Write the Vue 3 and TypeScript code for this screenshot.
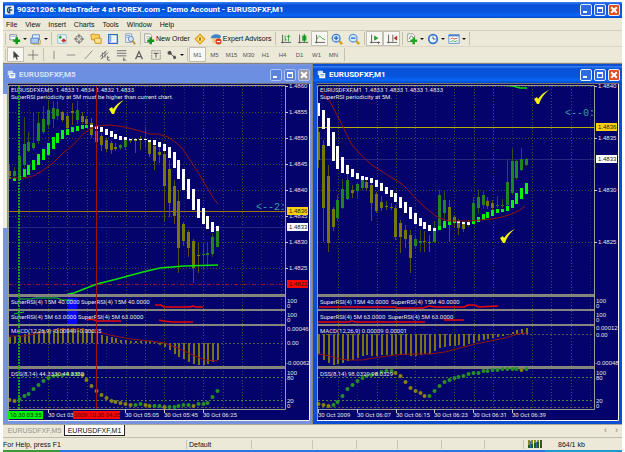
<script setup lang="ts">
type Pt = [number, number]
type Candle = [high: number, top: number, bottom: number, low: number, rising: 0 | 1]
type Bar = [top: number, bottom: number, color: 'g' | 'w']
interface Tag { y: number; text: string; kind: string }
interface Label { x: number; text: string }
interface Chart {
  id: string
  title: string
  active: boolean
  viewBox: string
  left: number
  axis: number
  end: number
  first: number
  grid: number[]
  rows: [number, string][]
  head: string
  note: string
  candles: Candle[]
  smooth: Bar[]
  average: Pt[]
  trend: Pt[]
  priceY: number
  bidY: number
  tags: Tag[]
  arrow: string
  arrowY: number
  checks: Pt[]
  sub1: Pt[][]
  sub2: Pt[][]
  rsiGap: number
  zero: number
  macd: number[]
  signal: Pt[]
  macdText: string
  macdAxis: [number, string][]
  dss: number[]
  dssText: string
  times: Label[]
}

const STEP = 4.84
const range = (from: number, step: number, n: number) => Array.from({ length: n }, (_, i) => Math.round(from + i * step))
const join = (p: Pt[]) => p.map(v => v.join(',')).join(' ')
const barX = (c: Chart, i: number) => Math.round(c.first + i * STEP - 0.5)
const rises = (v: number[], i: number) => (i > 0 ? v[i] <= v[i - 1] : false)

const charts: Chart[] = [
  {
    id: 'm5', title: 'EURUSDFXF,M5', active: false, viewBox: '8 83 302 338', left: 9, axis: 285, end: 309, first: 9.5,
    grid: range(28.5, 19.4, 14),
    rows: [[86, '1.4860'], [112, '1.4855'], [138, '1.4850'], [164, '1.4845'], [190, '1.4840'], [216, '1.4835'], [242, '1.4830'], [268, '1.4825']],
    head: 'EURUSDFXF,M5\u00a0 1.4833 1.4834 1.4832 1.4833',
    note: 'SuperRSI periodicity at 5M must be higher than current chart.',
    candles: [
      [165, 171, 176, 178, 0], [167, 171, 176, 178, 1], [140, 156, 177, 178, 1], [117, 144, 165, 168, 1], [132, 142, 151, 152, 1],
      [112, 143, 148, 150, 1], [112, 123, 141, 144, 1], [106, 119, 132, 134, 1], [100, 110, 125, 128, 1], [101, 108, 119, 128, 1],
      [101, 109, 116, 120, 1], [111, 112, 120, 122, 0], [112, 116, 128, 130, 0], [103, 111, 113, 125, 0], [101, 110, 120, 124, 1],
      [112, 116, 122, 124, 0], [116, 119, 124, 126, 0], [118, 123, 135, 138, 0], [126, 131, 142, 144, 0], [133, 136, 145, 151, 0],
      [138, 140, 149, 152, 0], [141, 143, 150, 154, 0], [143, 147, 149, 151, 0], [144, 145, 148, 150, 1], [137, 139, 147, 150, 1],
      [139, 140, 141, 143, 0], [138, 140, 141, 153, 0], [136, 139, 140, 150, 0], [127, 139, 140, 148, 1], [140, 141, 154, 157, 0],
      [143, 146, 161, 170, 0], [146, 152, 155, 163, 0], [151, 154, 186, 221, 0], [160, 169, 203, 217, 0], [180, 186, 216, 224, 0],
      [190, 201, 248, 273, 0], [222, 224, 241, 246, 0], [230, 232, 248, 257, 0], [239, 241, 268, 283, 0], [242, 255, 256, 273, 0],
      [242, 254, 255, 269, 1], [242, 253, 255, 267, 1], [233, 237, 254, 257, 1], [228, 231, 247, 247, 1],
    ],
    smooth: [
      [177, 179, 'g'], [178, 181, 'g'], [176, 180, 'g'], [169, 177, 'g'], [165, 175, 'g'], [160, 170, 'g'], [154, 165, 'g'], [149, 160, 'g'],
      [143, 155, 'g'], [137, 149, 'g'], [133, 143, 'g'], [130, 139, 'g'], [129, 135, 'g'], [127, 132, 'g'], [126, 131, 'g'], [125, 129, 'g'],
      [125, 128, 'g'], [125, 127, 'w'], [126, 129, 'w'], [127, 132, 'w'], [129, 135, 'w'], [131, 137, 'w'], [134, 139, 'w'], [136, 140, 'w'],
      [137, 140, 'w'], [139, 140, 'w'], [139, 140, 'w'], [139, 140, 'w'], [139, 140, 'w'], [140, 142, 'w'], [140, 145, 'w'], [142, 147, 'w'],
      [144, 151, 'w'], [147, 158, 'w'], [152, 168, 'w'], [160, 179, 'w'], [169, 190, 'w'], [179, 199, 'w'], [189, 210, 'w'], [199, 218, 'w'],
      [208, 224, 'w'], [216, 229, 'w'], [222, 232, 'w'], [226, 231, 'w'],
    ],
    average: [[9, 178], [26, 178], [33, 176], [42, 171], [53, 163], [63, 153], [72, 146], [83, 134], [90, 129], [97, 126], [110, 125], [125, 127], [140, 131], [150, 134], [158, 134], [168, 137], [175, 142], [182, 148], [190, 160], [198, 172], [206, 186], [214, 199], [218, 204]],
    trend: [[68, 294], [74, 293], [84, 289], [97, 284], [117, 279], [143, 272], [160, 268], [172, 267], [184, 266], [218, 265]],
    priceY: 211, bidY: 227,
    tags: [{ y: 211, text: '1.4836', kind: 'gold' }, { y: 227, text: '1.4833', kind: 'white' }, { y: 284, text: '1.4822', kind: 'red' }],
    arrow: '<--2:', arrowY: 211,
    checks: [[109, 100]],
    sub1: [[[155, 305], [161, 305], [164, 307], [190, 307], [193, 306], [196, 307], [203, 307]]],
    sub2: [[[87, 320], [91, 319], [97, 321], [121, 321]], [[159, 320], [163, 321], [173, 322], [193, 322]]],
    rsiGap: 81,
    zero: 343,
    macd: [337, 336, 336, 334, 333, 332, 331, 330, 329, 329, 328, 328, 328, 328, 328, 328, 329, 330, 332, 335, 336, 337, 338, 340, 340, 341, 341, 341, 341, 341, 342, 345, 347, 350, 354, 357, 359, 362, 364, 365, 365, 364, 362, 360],
    signal: [[9, 336], [25, 336], [40, 333], [60, 329], [80, 329], [95, 331], [110, 335], [130, 339], [150, 341], [165, 343], [180, 349], [195, 356], [205, 360], [218, 361]],
    macdText: 'MACD(12,26,9) -0.00049 -0.00035',
    macdAxis: [[329, '0.00046'], [343, '0.00'], [363, '-0.00062']],
    dss: [400, 401, 399, 396, 394, 389, 385, 381, 378, 376, 375, 375, 374, 374, 374, 375, 380, 386, 391, 395, 398, 401, 402, 403, 404, 405, 405, 404, 405, 406, 406, 406, 407, 407, 407, 406, 405, 405, 406, 404, 404, 403, 397, 391],
    dssText: 'DSS(8,14) 44.3330 44.3330',
    times: [{ x: 48, text: '30 Oct 03' }, { x: 125, text: '30 Oct 05:05' }, { x: 164, text: '30 Oct 05:45' }, { x: 203, text: '30 Oct 06:25' }],
  },
  {
    id: 'm1', title: 'EURUSDFXF,M1', active: true, viewBox: '316 83 303 338', left: 318, axis: 594, end: 618, first: 318.5,
    grid: range(337.7, 19.4, 14),
    rows: [[86, '1.4840'], [138, '1.4835'], [190, '1.4830'], [242, '1.4825']],
    head: 'EURUSDFXF,M1\u00a0 1.4833 1.4833 1.4833 1.4833',
    note: 'SuperRSI periodicity at 5M.',
    candles: [
      [128, 132, 160, 168, 0], [140, 145, 208, 242, 0], [165, 176, 243, 252, 0], [207, 209, 227, 231, 0], [195, 200, 218, 221, 1],
      [179, 189, 208, 209, 1], [174, 180, 199, 200, 1], [185, 190, 193, 198, 0], [183, 184, 191, 199, 1], [177, 178, 188, 190, 1],
      [180, 182, 188, 190, 0], [183, 185, 203, 221, 0], [192, 194, 211, 213, 0], [196, 202, 208, 211, 0], [201, 206, 207, 210, 0],
      [203, 207, 208, 210, 0], [205, 208, 237, 240, 0], [220, 223, 237, 253, 0], [225, 230, 239, 248, 0], [230, 235, 258, 273, 0],
      [235, 239, 246, 249, 1], [230, 241, 243, 252, 1], [231, 241, 242, 252, 0], [235, 242, 243, 252, 0], [221, 231, 242, 243, 1],
      [190, 195, 227, 230, 1], [190, 200, 213, 224, 1], [200, 207, 225, 242, 0], [215, 217, 222, 228, 0], [219, 222, 228, 235, 0],
      [221, 223, 229, 232, 0], [220, 222, 224, 227, 0], [197, 203, 222, 224, 1], [190, 197, 208, 214, 1], [190, 195, 205, 209, 1],
      [197, 201, 206, 209, 0], [200, 203, 208, 210, 0], [196, 205, 206, 208, 1], [199, 205, 206, 208, 1], [159, 182, 205, 208, 1],
      [148, 161, 193, 195, 1], [160, 161, 178, 180, 1], [148, 159, 170, 171, 1], [158, 159, 165, 166, 1],
    ],
    smooth: [
      [103, 116, 'w'], [110, 129, 'w'], [118, 146, 'w'], [132, 161, 'w'], [146, 169, 'w'], [157, 173, 'w'], [165, 174, 'w'], [169, 177, 'w'],
      [173, 179, 'w'], [176, 180, 'w'], [177, 180, 'w'], [178, 183, 'w'], [180, 187, 'w'], [183, 191, 'w'], [187, 194, 'w'], [190, 197, 'w'],
      [193, 202, 'w'], [197, 208, 'w'], [202, 213, 'w'], [207, 219, 'w'], [213, 224, 'w'], [218, 226, 'w'], [222, 229, 'w'], [225, 231, 'w'],
      [228, 231, 'w'], [226, 230, 'g'], [221, 228, 'g'], [221, 225, 'g'], [221, 223, 'g'], [221, 223, 'w'], [222, 224, 'w'], [222, 225, 'w'],
      [221, 224, 'g'], [217, 222, 'g'], [214, 220, 'g'], [212, 218, 'g'], [210, 216, 'g'], [209, 213, 'g'], [209, 212, 'g'], [206, 211, 'g'],
      [200, 208, 'g'], [193, 204, 'g'], [188, 199, 'g'], [183, 194, 'g'],
    ],
    average: [[319, 90], [324, 94], [329, 100], [337, 115], [347, 135], [352, 145], [359, 153], [372, 165], [389, 176], [402, 184], [410, 192], [416, 199], [427, 209], [436, 216], [442, 219], [449, 221], [469, 221], [492, 219], [502, 217], [512, 214], [520, 210], [525, 206]],
    trend: [[502, 85], [513, 86], [520, 88], [527, 88]],
    priceY: 127, bidY: 159,
    tags: [{ y: 127, text: '1.4836', kind: 'gold' }, { y: 159, text: '1.4833', kind: 'white' }],
    arrow: '<--0:', arrowY: 117,
    checks: [[534, 90], [500, 229]],
    sub1: [[[319, 307], [395, 307], [397, 308], [423, 308], [429, 306], [435, 307], [464, 307], [468, 305], [474, 305], [479, 307], [498, 306]]],
    sub2: [[[318, 322], [349, 322], [352, 321], [355, 322], [425, 322]], [[444, 320], [464, 320]]],
    rsiGap: 391,
    zero: 334,
    macd: [354, 360, 363, 365, 364, 363, 361, 360, 358, 356, 355, 356, 356, 355, 355, 355, 354, 355, 355, 356, 356, 355, 354, 354, 351, 348, 347, 346, 346, 345, 346, 344, 343, 341, 340, 339, 338, 337, 336, 335, 332, 330, 329, 328],
    signal: [[318, 354], [326, 355], [340, 359], [350, 360], [362, 360], [380, 357], [395, 355], [410, 354], [430, 354], [445, 352], [460, 348], [475, 344], [490, 341], [505, 338], [518, 334], [527, 333]],
    macdText: 'MACD(12,26,9) 0.00009 0.00001',
    macdAxis: [[328, '0.00012'], [335, '0.00'], [363, '-0.00048']],
    dss: [404, 405, 406, 405, 402, 396, 389, 385, 381, 378, 376, 375, 374, 372, 371, 371, 373, 376, 382, 388, 391, 393, 396, 396, 391, 386, 382, 380, 378, 377, 376, 374, 373, 373, 371, 371, 370, 370, 369, 369, 369, 369, 370, 369],
    dssText: 'DSS(8,14) 98.0329 98.0329',
    times: [{ x: 318, text: '30 Oct 2009' }, { x: 357, text: '30 Oct 06:07' }, { x: 396, text: '30 Oct 06:15' }, { x: 434, text: '30 Oct 06:23' }, { x: 473, text: '30 Oct 06:31' }, { x: 512, text: '30 Oct 06:39' }],
  },
]

const menu = ['File', 'View', 'Insert', 'Charts', 'Tools', 'Window', 'Help']
interface Tool { icon?: string; name: string; text?: string; caret?: boolean; on?: boolean; sep?: boolean }
const standard: Tool[] = [
  { icon: 'new-chart', name: 'New chart', caret: true }, { icon: 'profiles', name: 'Profiles', caret: true }, { name: 's1', sep: true },
  { icon: 'market', name: 'Market watch' }, { icon: 'target', name: 'Data window' }, { icon: 'folders', name: 'Navigator' },
  { icon: 'terminal', name: 'Terminal' }, { icon: 'tester', name: 'Strategy tester' }, { name: 's2', sep: true },
  { icon: 'order', name: 'New order', text: 'New Order' }, { icon: 'diamond', name: 'Meta editor' },
  { icon: 'expert', name: 'Expert advisors', text: 'Expert Advisors' }, { name: 's3', sep: true },
  { icon: 'bars', name: 'Bar chart' }, { icon: 'candles', name: 'Candlesticks' }, { icon: 'line', name: 'Line chart', on: true },
  { icon: 'zoom-in', name: 'Zoom in' }, { icon: 'zoom-out', name: 'Zoom out' }, { name: 's4', sep: true },
  { icon: 'scroll', name: 'Auto scroll', on: true }, { icon: 'shift', name: 'Chart shift', on: true }, { name: 's5', sep: true },
  { icon: 'indicator', name: 'Indicators', caret: true }, { icon: 'clock', name: 'Periods', caret: true }, { icon: 'template', name: 'Templates', caret: true },
]
const drawing: Tool[] = [
  { icon: 'cursor', name: 'Cursor', on: true }, { icon: 'cross', name: 'Crosshair' }, { name: 'd1', sep: true },
  { icon: 'vline', name: 'Vertical line' }, { icon: 'hline', name: 'Horizontal line' }, { icon: 'trend', name: 'Trendline' },
  { icon: 'channel', name: 'Channel' }, { icon: 'fibo', name: 'Fibonacci' }, { icon: 'text', name: 'Text' },
  { icon: 'label', name: 'Text label' }, { icon: 'arrows', name: 'Arrows', caret: true }, { name: 'd2', sep: true },
]
const periods = ['M1', 'M5', 'M15', 'M30', 'H1', 'H4', 'D1', 'W1', 'MN']
</script>

<template>
  <svg class="sprite" aria-hidden="true">
    <symbol id="new-chart" viewBox="0 0 14 14"><path d="M1 2h8v6H1z" fill="#fff" stroke="#708090" /><path d="M2 4h6" stroke="#8fb0dc" /><path d="M9 5v8M5 9h8" stroke="#109818" stroke-width="3" /></symbol>
    <symbol id="profiles" viewBox="0 0 14 14"><path d="M3 2h8v6H3z" fill="#dcebff" stroke="#5b88c8" /><path d="M1 6h9v6H1z" fill="#a9cbf5" stroke="#4878b8" /><path d="M3 13h9V8" fill="none" stroke="#c09a40" /></symbol>
    <symbol id="market" viewBox="0 0 14 14"><path d="M2 2h10v10H2z" fill="#e6f3fa" stroke="#8cbcd4" /><path d="M3 5l2-2 2 2-2 2z" fill="#20a030" /><path d="M6 9l3-3 3 3-3 2z" fill="#d03028" /></symbol>
    <symbol id="target" viewBox="0 0 14 14"><circle cx="7" cy="7" r="4" fill="none" stroke="#606060" /><path d="M7 1v5M7 8v5M1 7h5M8 7h5" stroke="#606060" /></symbol>
    <symbol id="folders" viewBox="0 0 14 14"><path d="M1 2l3-1 2 1h5v6H2z" fill="#ffd45c" stroke="#c88818" /><path d="M5 7l2-1h6v6H6z" fill="#ffe48a" stroke="#c88818" /></symbol>
    <symbol id="terminal" viewBox="0 0 14 14"><path d="M2 2h10v10H2z" fill="#fff" stroke="#3468b8" stroke-width="1.5" /><path d="M3 3h2v8H3z" fill="#7ba6e4" /><path d="M6 5h5M6 8h5" stroke="#c8d8f0" /></symbol>
    <symbol id="tester" viewBox="0 0 14 14"><path d="M2 1h7v10H2z" fill="#eef4ff" stroke="#8298b8" /><path d="M3 3h4M3 5h3" stroke="#7098d0" /><circle cx="8" cy="7" r="3" fill="#cfe6fa" stroke="#6080a8" /><path d="M10 9l3 4" stroke="#b88830" stroke-width="2" /></symbol>
    <symbol id="order" viewBox="0 0 14 14"><path d="M2 1h6l2 2v8H2z" fill="#fff" stroke="#909090" /><path d="M4 4h4M4 6h4" stroke="#b0b0b0" /><path d="M9 5v8M5 9h8" stroke="#109818" stroke-width="3" /></symbol>
    <symbol id="diamond" viewBox="0 0 14 14"><path d="M7 1l6 6-6 6-6-6z" fill="#fbbf20" stroke="#cf8c10" /><path d="M7 3l3 4-3 4-3-4z" fill="#fff2c0" /><path d="M7 5v4" stroke="#a86808" stroke-width="2" /></symbol>
    <symbol id="expert" viewBox="0 0 14 14"><path d="M1 6c0-5 10-6 12-2l-2 3z" fill="#3e84cc" /><path d="M3 6h8v4c-2 4-7 3-8 0z" fill="#f3c878" /><circle cx="10" cy="10" r="3.5" fill="#d83a20" /><path d="M8 10h4" stroke="#fff" stroke-width="1.5" /></symbol>
    <symbol id="bars" viewBox="0 0 14 14"><path d="M3 2v10M1 11h12" fill="none" stroke="#505050" /><path d="M6 3v6M6 8h2M10 2v8M8 4h4" stroke="#20a030" /></symbol>
    <symbol id="candles" viewBox="0 0 14 14"><path d="M3 2v10M1 11h12" stroke="#505050" /><path d="M6 3h5v6H6z" fill="#20b030" /><path d="M8.500 1v10" stroke="#107818" /></symbol>
    <symbol id="line" viewBox="0 0 14 14"><path d="M3 2v10M1 11h12" stroke="#505050" /><path d="M4 7c2-5 3-4 5-1l4 2" fill="none" stroke="#30a840" /></symbol>
    <symbol id="zoom-in" viewBox="0 0 14 14"><path d="M9 9l4 4" stroke="#d4a020" stroke-width="3" /><circle cx="6" cy="6" r="4.500" fill="#d4eaff" stroke="#3c80d0" stroke-width="1.500" /><path d="M6 3.500v5M3.500 6h5" stroke="#2060c0" stroke-width="1.500" /></symbol>
    <symbol id="zoom-out" viewBox="0 0 14 14"><path d="M9 9l4 4" stroke="#d4a020" stroke-width="3" /><circle cx="6" cy="6" r="4.500" fill="#d4eaff" stroke="#5c98dc" stroke-width="1.500" /><path d="M3.500 6h5" stroke="#2060c0" stroke-width="1.500" /></symbol>
    <symbol id="scroll" viewBox="0 0 14 14"><path d="M3 2v10M1 11h12M11 10v3" stroke="#505050" /><path d="M6 3l5 3-5 3z" fill="#20a030" /></symbol>
    <symbol id="shift" viewBox="0 0 14 14"><path d="M3 2v10M1 11h12M8 2v8" stroke="#505050" /><path d="M13 3L9 6l4 3z" fill="#b03020" /></symbol>
    <symbol id="indicator" viewBox="0 0 14 14"><path d="M2 1h6l2 2v7H2z" fill="#fff" stroke="#909090" /><path d="M4 7c1-5 2-3 4-3" fill="none" stroke="#606060" /><path d="M9 5v8M5 9h8" stroke="#20a820" stroke-width="3" /></symbol>
    <symbol id="clock" viewBox="0 0 14 14"><circle cx="7" cy="7" r="5" fill="#f4faff" stroke="#3474d0" stroke-width="2" /><path d="M7 4v3h3" fill="none" stroke="#304060" /></symbol>
    <symbol id="template" viewBox="0 0 14 14"><path d="M1 2h12v10H1z" fill="#fff" stroke="#4c84cc" /><path d="M1 3h12" stroke="#4c84cc" stroke-width="2" /><path d="M3 7l2-1 2 1 4-1" fill="none" stroke="#c04030" /><path d="M3 10l3-1 2 1 3-1" fill="none" stroke="#30a040" /></symbol>
    <symbol id="cursor" viewBox="0 0 14 14"><path d="M4 2v9l2-2 2 4 1-1-1-3h3z" fill="#404040" /></symbol>
    <symbol id="cross" viewBox="0 0 14 14"><path d="M7 1v12M1 7h12" stroke="#707070" /></symbol>
    <symbol id="vline" viewBox="0 0 14 14"><path d="M7 2v10" stroke="#808080" /></symbol>
    <symbol id="hline" viewBox="0 0 14 14"><path d="M2 7h10" stroke="#808080" /></symbol>
    <symbol id="trend" viewBox="0 0 14 14"><path d="M3 12l9-10" stroke="#808080" /></symbol>
    <symbol id="channel" viewBox="0 0 14 14"><path d="M1 9l8-7M2 12l9-8M4 4v7M7 3v7M10 8v5h3M10 10h2" fill="none" stroke="#606060" /></symbol>
    <symbol id="fibo" viewBox="0 0 14 14"><path d="M1 2h11M1 5h11M1 8h11M9 10v4h3M9 12h2" fill="none" stroke="#606060" /></symbol>
    <symbol id="text" viewBox="0 0 14 14"><path d="M3 12l4-9 4 9M5 9h4" fill="none" stroke="#606060" stroke-width="1.500" /></symbol>
    <symbol id="label" viewBox="0 0 14 14"><path d="M2 2h10v10H2z" fill="none" stroke="#808080" stroke-dasharray="2 1" /><path d="M4 5h6M7 5v5" stroke="#404040" /></symbol>
    <symbol id="arrows" viewBox="0 0 14 14"><path d="M2 3l3-1 2 3-2 2-3-1zM8 8l3 0 1 3-3 1z" fill="#505050" /><path d="M5 5l5 5" stroke="#505050" /></symbol>
    <symbol id="child" viewBox="0 0 12 12"><path d="M1 1h7v6H1z" fill="#c9dcff" /><path d="M3 4h8v7H3z" fill="#fff" /><path d="M4 6h6M5 8h4" stroke="#5c86cc" /></symbol>
  </svg>

  <div class="app">
    <header class="titlebar main-title">
      <svg class="logo" viewBox="0 0 10 10" aria-hidden="true"><rect width="10" height="10" rx="1" fill="#e8f0e8" /><path d="M7 2H5C2 2 2 8 5 8h1M5 5h3M5 3v5" fill="none" stroke="#1c5878" stroke-width="1.500" /></svg>
      <h1>90321206: MetaTrader 4 at FOREX.com - Demo Account - EURUSDFXF,M1</h1>
      <div class="caption">
        <button type="button" class="min" aria-label="Minimize"></button>
        <button type="button" class="max" aria-label="Restore"></button>
        <button type="button" class="close" aria-label="Close"></button>
      </div>
    </header>

    <nav class="menu"><button v-for="m in menu" :key="m" type="button">{{ m }}</button></nav>

    <div class="toolbar" role="toolbar" aria-label="Standard">
      <template v-for="t in standard" :key="t.name">
        <i v-if="t.sep" class="sep"></i>
        <button v-else type="button" :class="{ on: t.on, wide: t.text, drop: t.caret }" :aria-label="t.name">
          <svg aria-hidden="true"><use :href="'#' + t.icon" /></svg><span v-if="t.text">{{ t.text }}</span><b v-if="t.caret"></b>
        </button>
      </template>
      <i class="sep"></i>
    </div>
    <div class="toolbar" role="toolbar" aria-label="Line studies">
      <template v-for="t in drawing" :key="t.name">
        <i v-if="t.sep" class="sep"></i>
        <button v-else type="button" :class="{ on: t.on, drop: t.caret }" :aria-label="t.name">
          <svg aria-hidden="true"><use :href="'#' + t.icon" /></svg><b v-if="t.caret"></b>
        </button>
      </template>
      <button v-for="p in periods" :key="p" type="button" class="period" :class="{ on: p === 'M1' }">{{ p }}</button>
      <i class="sep"></i>
    </div>

    <main class="desk">
      <div class="edge"></div>
      <section v-for="c in charts" :key="c.id" class="window" :class="{ active: c.active }">
        <header class="titlebar">
          <svg class="child" aria-hidden="true"><use href="#child" /></svg>
          <h2>{{ c.title }}</h2>
          <div class="caption">
            <button type="button" class="min" aria-label="Minimize"></button>
            <button type="button" class="max" aria-label="Maximize"></button>
            <button type="button" class="close" aria-label="Close"></button>
          </div>
        </header>
        <svg class="chart" :viewBox="c.viewBox" role="img" :aria-label="c.title">
          <defs>
            <clipPath :id="'plot-' + c.id"><rect :x="c.left" y="85" :width="c.axis - c.left" height="324" /></clipPath>
          </defs>
          <rect :x="c.left - 1" y="83" width="304" height="338" fill="#03036b" />

          <g class="grid">
            <path v-for="(x, i) in c.grid" :key="x" :class="{ faint: i % 4 === (c.active ? 1 : 0) }" :d="`M${x}.5 86V409`" />
            <path v-for="r in c.rows" :key="r[0]" :d="`M${c.left} ${r[0]}.5H${c.axis}`" />
          </g>
          <path class="bid" :d="`M${c.left} ${c.bidY}.5H${c.axis}`" />
          <path class="price" :class="c.id" :d="`M${c.left} ${c.priceY}.5H${c.axis}`" />
          <path v-if="!c.active" class="stop" d="M9 284.500H285" />

          <g :clip-path="`url(#plot-${c.id})`">
            <g v-for="(k, i) in c.candles" :key="i" class="candle" :class="{ up: k[4] }">
              <rect class="wick" :x="barX(c, i)" :y="k[0]" width="1" :height="k[3] - k[0]" />
              <rect class="body" :x="barX(c, i) - 1" :y="k[1]" width="3" :height="k[2] - k[1]" />
            </g>
            <rect v-for="(s, i) in c.smooth" :key="i" class="smooth" :class="s[2]" :x="barX(c, i) - 1" :y="s[0]" width="3" :height="s[1] - s[0]" />
            <polyline class="average" :points="join(c.average)" />
            <polyline class="trend" :points="join(c.trend)" />
          </g>

          <text class="label" :x="c.left + 2" y="92">{{ c.head }}</text>
          <text class="label" :x="c.left + 2" y="99">{{ c.note }}</text>
          <svg :x="c.axis - 30" :y="c.arrowY - 12" width="29" height="16"><text class="hint" x="1" y="11">{{ c.arrow }}</text></svg>
          <path v-for="p in c.checks" :key="p[0]" class="check" :transform="`translate(${p[0]} ${p[1]})`" d="M0 9L3 7L4 9C7 5 10 2 15 0C10 4 7 8 5 14L3 14Z" />

          <g class="pane">
            <rect :x="c.left - 1" y="294" :width="c.axis - c.left + 1" height="3" />
            <rect :x="c.left - 1" y="309" :width="c.axis - c.left + 1" height="2" />
            <rect :x="c.left - 1" y="324" :width="c.axis - c.left + 1" height="2" />
            <rect :x="c.left - 1" y="366" :width="c.axis - c.left + 1" height="3" />
          </g>

          <g v-if="!c.active">
            <rect x="68" y="298" width="9" height="11" fill="#0808ff" />
            <rect x="68" y="311" width="9" height="13" fill="#0808ff" />
            <polyline class="rsi-up" points="19,299 31,299 35,298 57,298 62,300 73,300" />
            <polyline class="rsi-up" points="14,314 18,313 24,312" />
          </g>
          <polyline v-for="(s, i) in [...c.sub1, ...c.sub2]" :key="i" class="rsi" :points="join(s)" />
          <text class="label" :x="c.left + 2" y="304">SuperRSI(4) 15M 40.0000</text>
          <text class="label" :x="c.rsiGap" y="304">SuperRSI(4) 15M 40.0000</text>
          <text class="label" :x="c.left + 2" y="319">SuperRSI(4) 5M 63.0000</text>
          <text class="label" :x="c.rsiGap - 3" y="319">SuperRSI(4) 5M 63.0000</text>

          <path class="zero" :d="`M${c.left} ${c.zero}.5H${c.axis}`" />
          <rect v-for="(m, i) in c.macd" :key="i" class="macd" :x="barX(c, i)" :y="Math.min(m, c.zero)" width="2" :height="Math.abs(m - c.zero)" />
          <polyline class="average" :points="join(c.signal)" />
          <text class="label" :x="c.left + 2" y="333">{{ c.macdText }}</text>

          <path class="level" :d="`M${c.left} 377.5H${c.axis}M${c.left} 400.5H${c.axis}`" />
          <path class="zero" :d="`M${c.left} 407.5H${c.axis}`" />
          <circle v-for="(d, i) in c.dss" :key="i" class="dot" :class="{ up: rises(c.dss, i) }" :cx="barX(c, i) + 0.5" :cy="d" r="2" />
          <text class="label" :x="c.left + 2" y="376">{{ c.dssText }}</text>

          <path class="frame" :d="`M${c.left - 0.5} 421V85.500H${c.axis + 0.5}V409.500H${c.left}`" />
          <g v-if="!c.active">
            <path class="mark-start" d="M19 86V409" />
            <path class="mark-end" d="M96.500 86V409" />
          </g>

          <g class="scale">
            <g v-for="r in c.rows" :key="'p' + r[0]">
              <path class="tick" :d="`M${c.axis} ${r[0]}.5h3`" />
              <text class="label" :x="c.axis + 4" :y="r[0] + 2">{{ r[1] }}</text>
            </g>
            <g v-for="t in c.tags" :key="t.text" class="tag" :class="t.kind">
              <rect :x="c.axis + 2" :y="t.y - 4" width="21" height="8" />
              <text :x="c.axis + 4" :y="t.y + 2">{{ t.text }}</text>
            </g>
            <text class="label" :x="c.axis + 2" y="303">100</text><text class="label" :x="c.axis + 2" y="308">0</text>
            <text class="label" :x="c.axis + 2" y="317">100</text><text class="label" :x="c.axis + 2" y="322">0</text>
            <text v-for="m in c.macdAxis" :key="m[1]" class="label" :x="c.axis + (m[1].startsWith('-') ? 1 : 2)" :y="m[0] + 2">{{ m[1] }}</text>
            <text class="label" :x="c.axis + 2" y="375">100</text><text class="label" :x="c.axis + 2" y="380">80</text>
            <text class="label" :x="c.axis + 2" y="403">20</text><text class="label" :x="c.axis + 2" y="408">0</text>
          </g>
          <g v-for="t in c.times" :key="t.text">
            <path class="tick" :d="`M${t.x}.5 409v4`" />
            <text class="label" :x="t.x" y="417">{{ t.text }}</text>
          </g>
          <g v-if="!c.active">
            <rect x="8" y="411" width="35" height="8" fill="#08f008" />
            <text class="stamp dark" x="10" y="417">10.30 03:35</text>
            <rect x="73" y="411" width="47" height="8" fill="#f80808" />
            <text class="stamp" x="74" y="417">2009.10.30 04:35</text>
          </g>
          <path class="rim" :d="`M${c.left - 1} 83.500H${c.end + 1}`" />
          <path class="shine" :d="`M${c.left - 1} 420.500H${c.end + 0.5}V84`" />
        </svg>
      </section>
    </main>

    <div class="tabs" role="tablist">
      <button type="button" role="tab" aria-selected="false">EURUSDFXF,M5</button>
      <button type="button" role="tab" aria-selected="true" class="current">EURUSDFXF,M1</button>
      <div class="pager"><button type="button" aria-label="Previous tab">‹</button><button type="button" aria-label="Next tab">›</button></div>
    </div>

    <footer class="status">
      <span>For Help, press F1</span><span>Default</span><span></span><span></span><span></span><span></span><span></span><span></span>
      <span class="net">
        <svg viewBox="0 0 14 8" aria-hidden="true"><path d="M1 0v8M4 0v8M7 1v7M10 1v7M13 0v8" stroke="#285c18" stroke-width="2" /><path d="M1 0v5M4 0v4M7 0v3M10 0v2" stroke="#8c8c20" stroke-width="2" /><path d="M2.500 1v7M8.500 2v6" stroke="#3070b0" /></svg>
        864/1 kb
      </span>
    </footer>
    <div class="taskbar"></div>
  </div>
</template>

<style>
body { background: #fff; }
</style>

<style scoped>
.sprite { position: absolute; width: 0; height: 0; }
.app { display: flex; flex-direction: column; padding: 2px 3px 0; font-family: "Liberation Sans", Arial, sans-serif; font-size: 7px; color: #111; }
button { margin: 0; padding: 0; border: 0; background: none; font: inherit; color: inherit; }

.titlebar { display: flex; align-items: center; height: 17px; gap: 3px; color: #fff; background: #6d8fe2; }
.titlebar h1, .titlebar h2 { flex: 1; margin: 0; font-family: Roboto, "Liberation Sans", sans-serif; font-size: 8px; line-height: 12px; font-weight: bold; white-space: nowrap; overflow: hidden; }
.titlebar h2 { color: #d5e0fa; }
.main-title, .active .titlebar { background: linear-gradient(#3a83f4 0, #0750d6 3px, #0754dc 60%, #0665f6 85%, #0447bd); }
.active .titlebar h2 { color: #fff; }
.main-title { height: 16px; }
.logo { width: 9px; height: 10px; margin-left: 2px; }
.child { width: 9px; height: 9px; margin-left: 4px; }
.caption { display: flex; gap: 2px; padding-right: 2px; }
.caption button { position: relative; width: 12px; height: 12px; border: 1px solid #e6edfb; border-radius: 2px; background: #2f6ae4; }
.window:not(.active) .caption button { background: #5b83dc; border-color: #aec3f3; }
.caption .min::after { content: ""; position: absolute; left: 2px; bottom: 2px; width: 4px; height: 2px; background: #fff; }
.caption .max::after { content: ""; position: absolute; inset: 2px; border: 1px solid #fff; border-top-width: 2px; }
.caption .close { background: #de4f22; }
.window:not(.active) .caption .close { background: #9898a0; }
.caption .close::before, .caption .close::after { content: ""; position: absolute; left: 1px; top: 4px; width: 8px; height: 2px; background: #fff; transform: rotate(45deg); }
.caption .close::after { transform: rotate(-45deg); }

.menu { display: flex; align-items: center; gap: 8px; height: 12px; padding-left: 3px; background: #ece9d8; border-bottom: 1px solid #d0cdbc; }
.toolbar { display: flex; align-items: center; height: 16px; padding-left: 4px; background: #ece9d8; border-bottom: 1px solid #dad7c6; box-sizing: border-box; }
.toolbar::before { content: ""; width: 1px; height: 12px; margin-left: -2px; margin-right: 1px; background: #c8c5b4; }
.toolbar button { display: flex; align-items: center; justify-content: center; box-sizing: border-box; width: 17px; height: 15px; white-space: nowrap; }
.toolbar button.drop { width: 21px; gap: 2px; }
.toolbar button.wide { width: auto; gap: 1px; padding: 0 2px 0 1px; }
.toolbar button.on { background: #f8f7f2; border: 1px solid #c4c1b0; }
.toolbar svg { width: 12px; height: 12px; flex: none; }
.toolbar b { border: 2px solid transparent; border-top-color: #111; border-bottom: 0; }
.toolbar .sep { width: 1px; height: 13px; margin: 0 1px 0 2px; background: #c4c1b0; }
.toolbar .period { font-size: 6px; color: #555; }

.desk { position: relative; display: grid; grid-template-columns: 1fr 1fr; gap: 1px; padding-top: 1px; background: #84847c; }
.window { padding: 2px 2px 3px 5px; background: #7793e0; }
.window .titlebar { margin: 0 -2px 0 -5px; }
.window.active { padding: 2px 3px 3px; background: #0a4fd2; }
.window.active .titlebar { margin: 0 -3px; }
.edge { position: absolute; left: 0; top: 31px; width: 4px; height: 134px; background: #efedde; }
.chart { display: block; width: 100%; height: auto; }
.chart text { font-family: Roboto, "Liberation Sans", sans-serif; font-size: 6px; }
.chart .scale text { font-family: "Liberation Sans", Arial, sans-serif; }
.label { fill: #e4e4e0; }
.grid path { fill: none; stroke: #4a4a30; stroke-dasharray: 1 2; shape-rendering: crispEdges; }
.grid path.faint { stroke: #26265c; }
.bid { stroke: #26267e; }
.price { stroke: #b4ac08; shape-rendering: crispEdges; }
.price.m5 { stroke: #a07408; }
.stop { stroke: #981428; stroke-dasharray: 4 2 1 2; }
.candle, .smooth, .macd, .pane { shape-rendering: crispEdges; }
.wick { fill: #5b5010; }
.body { fill: #787808; }
.up .wick { fill: #30501c; }
.up .body { fill: #208420; }
.smooth.g { fill: #04f404; }
.smooth.w { fill: #fff; }
.average { fill: none; stroke: #94140f; }
.trend { fill: none; stroke: #08e008; stroke-width: 1.5; }
.chart .hint { font-family: "Liberation Mono", monospace; font-size: 10px; fill: #38a0a0; }
.check { fill: #f8f408; }
.pane rect { fill: #85857e; }
.rsi { fill: none; stroke: #e80808; stroke-width: 1.5; }
.rsi-up { fill: none; stroke: #08d808; }
.zero { stroke: #55554c; stroke-dasharray: 2 2; }
.macd { fill: #7c7410; }
.level { stroke: #4c8238; stroke-dasharray: 2 2; }
.dot { fill: #8a8210; }
.dot.up { fill: #269026; }
.frame { fill: none; stroke: #9c9c90; }
.mark-start { stroke: #18a018; stroke-width: 2; stroke-dasharray: 2 1; }
.mark-end { stroke: #a01010; }
.tick { stroke: #c8c8c0; }
.tag.gold rect { fill: #fcd010; }
.tag.white rect { fill: #fff; }
.tag.red rect { fill: #fc0808; }
.tag text { fill: #181810; }
.stamp { fill: #500; }
.stamp.dark { fill: #043004; }
.rim { stroke: #74746c; }
.shine { fill: none; stroke: #f4f4ec; }

.tabs { display: flex; align-items: flex-start; height: 12px; padding: 0 2px; background: #ece9d8; border-top: 1px solid #a8a698; }
.tabs > button { height: 11px; width: 59px; color: #96948a; }
.tabs > .current { width: 61px; color: #111; background: #fff; border: 1px solid #222; border-top: 0; }
.pager { display: flex; gap: 8px; margin-left: auto; padding-right: 2px; color: #8a8878; font-size: 9px; }
.status { display: grid; grid-template-columns: 183fr 65fr 61fr 44fr 41fr 44fr 43fr 39fr 99fr; height: 12px; align-items: center; background: #ece9d8; border-top: 1px solid #c0bdad; }
.status span { height: 9px; line-height: 9px; padding-left: 2px; border-left: 1px solid #c8c5b4; white-space: nowrap; }
.status span:first-child { border-left: 0; padding-left: 0; }
.status .net { display: flex; gap: 16px; align-items: center; padding-left: 4px; }
.net svg { width: 14px; height: 8px; }
.taskbar { height: 2px; background: linear-gradient(90deg, #3c9838 0 57px, #2f74e4 57px 542px, #1a9ccc 542px); }
</style>
